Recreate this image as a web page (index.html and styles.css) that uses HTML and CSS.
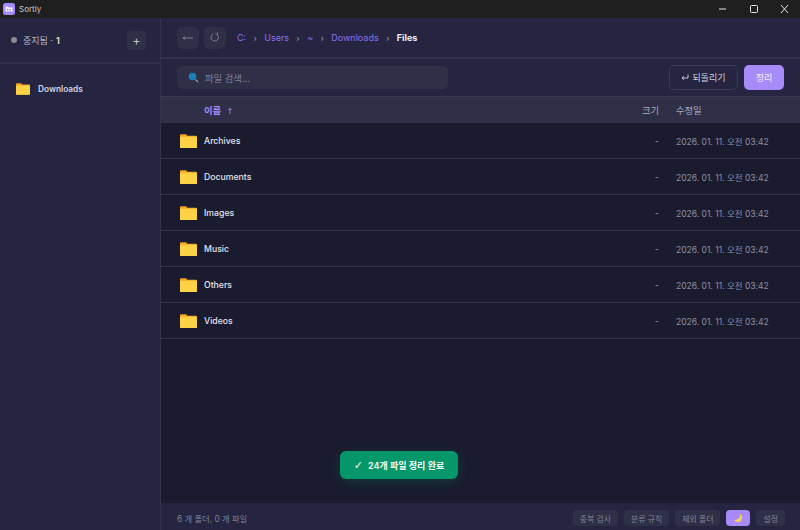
FILE: index.html
```html
<!DOCTYPE html>
<html lang="ko">
    <head>
        <title>Sortly</title>
        <meta charset="UTF-8">
        <meta name="viewport" content="width=device-width, initial-scale=1">
        <link rel="stylesheet" href="styles.css">
    </head>
    <body>
        <svg class="defs" width="0" height="0">
            <symbol id="folderIcon" viewBox="0 0 16 14"><path d="M0 2a1 1 0 0 1 1-1h4.500l1.500 1.500h8a1 1 0 0 1 1 1V13a1 1 0 0 1-1 1H1a1 1 0 0 1-1-1z" fill="#f5a623"/><rect y="3.500" width="16" height="10.500" rx="1" fill="#fdd244"/></symbol>
        </svg>
        <div id="titlebar">
            <svg class="appIcon" width="12" height="12" viewBox="0 0 12 12"><rect width="12" height="12" rx="2.500" fill="#a78bfa"/><path d="M2.500 3.500h2.500l.8 1h3.700v4h-7z" fill="#f4f0ff"/><path d="M4 6h1.200v1.200H4zM6.300 6h1.200v1.200H6.300z" fill="#7c5cd6"/></svg>
            <span class="appName">Sortly</span>
            <div class="winBtns">
                <svg width="9" height="10" viewBox="0 0 9 10"><path d="M1 5h7" stroke="#e4e4e4" stroke-width="1"/></svg>
                <svg width="9" height="10" viewBox="0 0 9 10"><rect x="1.500" y="1.500" width="7" height="7" rx="1" fill="none" stroke="#e4e4e4"/></svg>
                <svg width="9" height="10" viewBox="0 0 9 10"><path d="M1 1l7 8M8 1l-7 8" stroke="#e4e4e4" stroke-width="1"/></svg>
            </div>
        </div>
        <div id="main">
            <div id="sidebar">
                <div class="sideHead">
                    <div class="status"><i class="dot"></i>중지됨 · <b>1</b></div>
                    <div class="addBtn">+</div>
                </div>
                <div class="sideList">
                    <div class="sideItem">
                        <svg width="14" height="13"><use href="#folderIcon"/></svg>
                        Downloads
                    </div>
                </div>
            </div>
            <div id="content">
                <div class="topBar">
                    <div class="iconBtn">
                        <svg width="12" height="8" viewBox="0 0 12 8"><path d="M1 4h10M1 4l2-1.500M1 4l2 1.500" fill="none" stroke="#7b7d92" stroke-width="1"/></svg>
                    </div>
                    <div class="iconBtn">
                        <svg width="10" height="11" viewBox="0 0 10 11"><path d="M3.200 1.900A3.700 3.700 0 1 0 7.400 2.700M5.400 1.300l2 1.300.2-2.200" fill="none" stroke="#7b7d92" stroke-width="1"/></svg>
                    </div>
                    <ul class="crumbs">
                        <li>C:</li><li class="sep">›</li>
                        <li>Users</li><li class="sep">›</li>
                        <li class="home">~</li><li class="sep">›</li>
                        <li>Downloads</li><li class="sep">›</li>
                        <li class="now">Files</li>
                    </ul>
                </div>
                <div class="searchBar">
                    <div class="search">
                        <svg width="11" height="11" viewBox="0 0 11 11"><circle cx="4.500" cy="4.500" r="3.800" fill="#1d7fb8"/><path d="M7.500 7.500l2.500 2.500" stroke="#8a94a8" stroke-width="1.500"/></svg>
                        <span>파일 검색...</span>
                    </div>
                    <div class="undoBtn">
                        <svg class="undoMark" width="8" height="7" viewBox="0 0 8 7"><path d="M7 .5v3.500H1M1 4l2-1.700M1 4l2 1.700" fill="none" stroke="#d0d2e0" stroke-width=".9"/></svg>
                        되돌리기
                    </div>
                    <div class="sortBtn">정리</div>
                </div>
                <div class="tableHead">
                    <div class="colName">이름 <span class="sortMark">↑</span></div>
                    <div class="colSize">크기</div>
                    <div class="colDate">수정일</div>
                </div>
                <div class="rows">
                    <div class="row">
                        <svg class="folder" width="17" height="15"><use href="#folderIcon"/></svg>
                        <div class="colName">Archives</div><div class="colSize">-</div><div class="colDate">2026. 01. 11. 오전 03:42</div>
                    </div>
                    <div class="row">
                        <svg class="folder" width="17" height="15"><use href="#folderIcon"/></svg>
                        <div class="colName">Documents</div><div class="colSize">-</div><div class="colDate">2026. 01. 11. 오전 03:42</div>
                    </div>
                    <div class="row">
                        <svg class="folder" width="17" height="15"><use href="#folderIcon"/></svg>
                        <div class="colName">Images</div><div class="colSize">-</div><div class="colDate">2026. 01. 11. 오전 03:42</div>
                    </div>
                    <div class="row">
                        <svg class="folder" width="17" height="15"><use href="#folderIcon"/></svg>
                        <div class="colName">Music</div><div class="colSize">-</div><div class="colDate">2026. 01. 11. 오전 03:42</div>
                    </div>
                    <div class="row">
                        <svg class="folder" width="17" height="15"><use href="#folderIcon"/></svg>
                        <div class="colName">Others</div><div class="colSize">-</div><div class="colDate">2026. 01. 11. 오전 03:42</div>
                    </div>
                    <div class="row">
                        <svg class="folder" width="17" height="15"><use href="#folderIcon"/></svg>
                        <div class="colName">Videos</div><div class="colSize">-</div><div class="colDate">2026. 01. 11. 오전 03:42</div>
                    </div>
                </div>
                <div class="toast"><span class="check">✓</span>24개 파일 정리 완료</div>
                <div class="footer">
                    <span class="count">6 개 폴더, 0 개 파일</span>
                    <div class="footBtn">중복 검사</div>
                    <div class="footBtn">분류 규칙</div>
                    <div class="footBtn">제외 폴더</div>
                    <div class="footBtn moon">
                        <svg width="10" height="10" viewBox="0 0 10 10"><path d="M6.800 1C7.600 4.600 5.400 7 1.200 6.800 2.600 9.400 6.400 9.800 8.200 7.400 9.800 5.200 9 2.200 6.800 1z" fill="#fcd34d"/></svg>
                    </div>
                    <div class="footBtn">설정</div>
                </div>
            </div>
        </div>
    </body>
</html>
```

FILE: styles.css
```css
body,ul{margin: 0;padding: 0}
li{list-style: none}

html,body{height: 100%;overflow: hidden}
body{display: flex;flex-direction: column;background: #1a1b2e;color: #e2e4f0;
font: 9px Inter, "Noto Sans CJK KR", sans-serif}
.defs{position: absolute}

#titlebar{height: 18px;flex: none;background: #1e1f1e;display: flex;align-items: center;padding-left: 3px;color: #c8c8c8}
.appName{margin-left: 4px;font-size: 8px}
.winBtns{margin-left: auto;display: flex;gap: 22px;padding-right: 11px}

#main{flex: 1;display: flex;min-height: 0}

#sidebar{width: 160px;flex: none;background: #252541;border-right: 1px solid #33334f}
.sideHead{height: 46px;box-sizing: border-box;border-bottom: 2px solid #2f2f4c;display: flex;align-items: center;padding: 0 14px 0 11px}
.status{display: flex;align-items: center;color: #b9bccb;font-size: 9px}
.status b{color: #f0e6c0;margin-left: 3px;font-weight: 600}
.dot{width: 6px;height: 6px;border-radius: 50%;background: #8a8a96;margin-right: 6px}
.addBtn{margin-left: auto;width: 19px;height: 19px;border-radius: 4px;background: #2f2f48;color: #c0c2d0;
display: flex;align-items: center;justify-content: center;font-size: 12px}
.sideList{padding: 16px 16px}
.sideItem{display: flex;align-items: center;gap: 8px;height: 17px;font-size: 8.300px;font-weight: 600;color: #d2d4e8}

#content{flex: 1;display: flex;flex-direction: column;position: relative;min-width: 0}

.topBar{height: 41px;flex: none;background: #252541;border-bottom: 2px solid #2f2f4c;display: flex;align-items: center;padding-left: 16px;gap: 5px;box-sizing: border-box}
.iconBtn{width: 22px;height: 22px;border-radius: 5px;background: #2f2f48;display: flex;align-items: center;justify-content: center}
.crumbs{display: flex;align-items: center;gap: 7.500px;margin-left: 6px;color: #8b6ff0;font-size: 9px;font-weight: 400}
.crumbs .sep{color: #a0a2b5;font-size: 8px}
.crumbs .home{width: 6px;text-align: center}
.crumbs .now{color: #f0f0f8;font-weight: 700}

.searchBar{height: 38px;flex: none;background: #252541;border-bottom: 1px solid #3a3a55;display: flex;align-items: center;padding: 0 16px;box-sizing: border-box}
.search{width: 271px;height: 23px;border-radius: 5px;background: #2f2f48;display: flex;align-items: center;gap: 6px;padding-left: 11px;box-sizing: border-box;color: #7f8296;font-size: 9.300px}
.undoBtn{margin-left: auto;width: 69px;height: 25px;border-radius: 5px;border: 1px solid #3a3a55;box-sizing: border-box;
display: flex;align-items: center;justify-content: center;color: #d0d2e0;font-size: 9px}
.undoMark{margin-right: 3px}
.sortBtn{margin-left: 6px;width: 40px;height: 25px;border-radius: 5px;background: #a78bfa;color: #f3efff;
display: flex;align-items: center;justify-content: center;font-size: 9px}

.tableHead{height: 26px;flex: none;background: #2f2f48;display: flex;align-items: center;padding-left: 43px;box-sizing: border-box;color: #a8abbd;font-size: 9.300px}
.tableHead .colName{color: #a78bfa;font-weight: 600;flex: 1}
.sortMark{font-size: 8px;font-weight: 400;margin-left: 3px;font-family: "DejaVu Sans", sans-serif}
.colSize{width: 60px;text-align: right}
.colDate{width: 141px;padding-left: 17px;box-sizing: border-box}

.rows{flex: 1}
.row{height: 36px;border-bottom: 1px solid #33334d;box-sizing: border-box;display: flex;align-items: center;padding-left: 19px;color: #e2e4f0}
.row .folder{margin-right: 7px}
.row .colName{flex: 1;font-size: 8.700px;font-weight: 500}
.row .colSize{color: #8d90a5}
.row .colDate{color: #8d90a5;font-size: 8.500px}

.toast{position: absolute;left: 179px;top: 433px;width: 118px;height: 28px;border-radius: 6px;background: #059669;
color: #f2fff8;font-weight: 600;font-size: 9px;display: flex;align-items: center;justify-content: center;box-shadow: 0 3px 12px rgba(5,150,105,.25)}
.check{font: bold 11px "DejaVu Sans", sans-serif;margin-right: 5px}

.footer{height: 27px;flex: none;background: #252541;display: flex;align-items: center;gap: 6px;padding: 3px 15px 0 16px;box-sizing: border-box}
.count{margin-right: auto;color: #7f8296;font-size: 8.300px}
.footBtn{height: 16px;padding: 0 7px;border-radius: 4px;background: #2f2f48;color: #7f8296;font-size: 7.900px;display: flex;align-items: center}
.moon{background: #a78bfa;width: 24px;box-sizing: border-box;justify-content: center;padding: 0}
```
